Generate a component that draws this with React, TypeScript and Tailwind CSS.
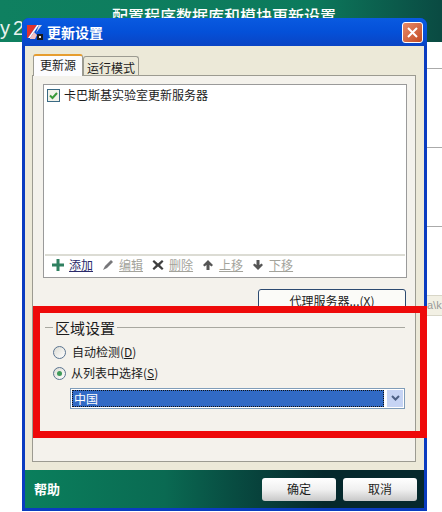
const F = "font-['SimSun','Noto_Sans_CJK_SC',sans-serif]";

function ToolItem({ icon, label, on }: { icon: React.ReactNode; label: string; on?: boolean }) {
  return (
    <div className="flex items-center gap-[5px]">
      <svg width="12" height="12" viewBox="0 0 12 12">{icon}</svg>
      <span className={`text-[12px] leading-[14px] underline ${on ? 'text-[#2a2a6a]' : 'text-[#a3a39b]'}`}>{label}</span>
    </div>
  );
}

export default function App() {
  return (
    <div className={`relative h-[512px] w-[442px] overflow-hidden bg-white ${F} text-[12px] text-[#1c1c1c]`}>
      <div className="flex h-[42px] justify-center bg-gradient-to-r from-[#0f8060] from-0% via-[#0c7a5c] via-70% to-[#0a4a42] to-100% pl-[6px]">
        <div className="mt-[6px] text-[16px] font-medium leading-[18px] text-white">配置程序数据库和模块更新设置</div>
      </div>
      <div className="absolute left-0 top-[15px] flex w-[22px] gap-[3px] overflow-hidden text-[20px] leading-[26px] text-[#e8f2ee] font-['Liberation_Sans',sans-serif]"><span>y</span><span>20</span></div>
      <div className="absolute right-0 top-[68px] h-px w-[16px] bg-[#aaa]" />
      <div className="absolute right-0 top-[147px] h-px w-[16px] bg-[#aaa]" />
      <div className="absolute right-0 top-[226px] h-px w-[16px] bg-[#aaa]" />
      <div className="absolute left-[22px] top-[18px] flex h-[493px] w-[405px] flex-col overflow-hidden rounded-t-[7px] bg-[#0a3cc0] px-[3px] pb-[3px]">
        <div className="-mx-[3px] flex h-[28px] shrink-0 items-center bg-gradient-to-b from-[#0a5ae0] via-[#0450d8] to-[#0a44c4] pl-[5px] pr-[4px]">
          <svg width="16" height="16" viewBox="0 0 16 16">
            <path d="M0 1h10L1 14l-1 0z" fill="#e0332c" />
            <path d="M10 1h2L3 14H1z" fill="#ffffff" />
            <path d="M12 1h3L9 9z" fill="#d8d8e0" />
            <path d="M3 14l4-6 3 3-2 4H3z" fill="#f3c0c0" />
            <rect x="10" y="10" width="6" height="6" fill="#1a1a1a" />
            <rect x="12" y="12" width="2" height="2" fill="#e8e8e8" />
          </svg>
          <span className="ml-[4px] text-[14px] font-semibold leading-[16px] text-white">更新设置</span>
          <div className="ml-auto mt-[1px] flex h-[21px] w-[21px] items-center justify-center rounded-[3px] border border-white bg-gradient-to-br from-[#e88a68] to-[#c24a20]">
            <svg width="13" height="13" viewBox="0 0 13 13"><path d="M2 2l9 9M11 2l-9 9" stroke="#fff" strokeWidth="2" /></svg>
          </div>
        </div>
        <div className="flex min-h-0 flex-1 flex-col bg-[#ece9d8] pl-[7px] pr-[8px] pt-[8px]">
          <div className="flex h-[21px] shrink-0 items-end pl-[1px]">
            <div className="relative z-10 -mb-px flex h-[22px] w-[50px] justify-center rounded-t-[3px] border-x border-[#9c9b91] border-t-[2px] border-t-[#e69d2f] bg-[#fcfcfe] pt-[2px] leading-[14px]">更新源</div>
            <div className="flex h-[19px] w-[56px] justify-center rounded-t-[3px] border-x border-t border-[#9c9b91] bg-[#ece9d8] pt-[4px] leading-[14px]">运行模式</div>
          </div>
          <div className="flex h-[387px] shrink-0 flex-col border border-[#9c9b91] bg-[#f4f2ec] pl-[10px] pr-[8px] pt-[8px]">
            <div className="flex h-[194px] shrink-0 flex-col border border-[#9a9a9a] bg-white">
              <div className="flex items-center gap-[4px] pl-[3px] pt-[3px]">
                <div className="flex h-[13px] w-[13px] items-center justify-center border border-[#3a6a84] bg-[#f2f2ea]">
                  <svg width="11" height="11" viewBox="0 0 11 11"><path d="M2 5.5l2.5 2.5L9 3" fill="none" stroke="#3a9a3a" strokeWidth="2" /></svg>
                </div>
                <span className="leading-[14px]">卡巴斯基实验室更新服务器</span>
              </div>
              <div className="mx-[1px] mt-auto flex h-[23px] items-center gap-[9px] border-t-[2px] border-[#dcdcd4] pb-[4px] pl-[7px]">
                <ToolItem on label="添加" icon={<path d="M4.500 0h3v4.500h4.500v3h-4.500v4.500h-3v-4.500h-4.500v-3h4.500z" fill="#2f8060" />} />
                <ToolItem label="编辑" icon={<path d="M9 1l2 2-6 6-4 2 2-4z" fill="#77777a" />} />
                <ToolItem label="删除" icon={<path d="M2 1l4 3.500L10 1l1.500 1.500L8 6l3.500 3.500L10 11 6 7.500 2 11 .5 9.500 4 6 .5 2.500z" fill="#3f3f3f" />} />
                <ToolItem label="上移" icon={<path d="M6 1l5 5-1.500 1.500L7.500 6v5h-3V6L2.500 7.500 1 6z" fill="#555" />} />
                <ToolItem label="下移" icon={<path d="M6 11L1 6l1.500-1.500L4.500 6V1h3v5l2-1.500L11 6z" fill="#555" />} />
              </div>
            </div>
            <div className="mt-[11px] flex justify-end pr-[1px]">
              <div className="flex h-[22px] w-[148px] items-start justify-center rounded-[3px] border border-[#2c4a70] bg-[#fbfbf8] pt-[4px] leading-[14px]">代理服务器...(<span className="underline">X</span>)</div>
            </div>
            <div className="ml-[2px] mr-[2px] mt-[9px] flex h-[15px] items-center">
              <div className="h-px w-[8px] bg-[#a8a8a0]" />
              <span className="mx-[2px] text-[15px] leading-[15px]">区域设置</span>
              <div className="h-px flex-1 bg-[#a8a8a0]" />
            </div>
            <div className="mt-[10px] flex flex-col gap-[7px] pl-[10px]">
              <div className="flex h-[14px] items-center gap-[6px]">
                <div className="h-[13px] w-[13px] rounded-full border border-[#5a7490] bg-gradient-to-br from-[#dcdcd4] to-[#ffffff]" />
                <span className="leading-[14px]">自动检测(<span className="underline">D</span>)</span>
              </div>
              <div className="flex h-[14px] items-center gap-[5px]">
                <div className="flex h-[13px] w-[13px] items-center justify-center rounded-full border border-[#5a7490] bg-gradient-to-br from-[#dcdcd4] to-[#ffffff]">
                  <div className="h-[5px] w-[5px] rounded-full bg-[#3f9a5a]" />
                </div>
                <span className="leading-[14px]">从列表中选择(<span className="underline">S</span>)</span>
              </div>
            </div>
            <div className="ml-[27px] mt-[8px] flex h-[21px] w-[335px] border border-[#7f9db9] bg-white p-[1px]">
              <div className="flex flex-1 items-center border border-dotted border-[#111] bg-[#316ac5] pl-[1px] leading-[14px] text-white">中国</div>
              <div className="ml-[3px] flex w-[16px] items-center justify-center bg-[#c6d4f4]">
                <svg width="9" height="7" viewBox="0 0 9 7"><path d="M1 1l3.500 3.500L8 1" fill="none" stroke="#4d6185" strokeWidth="2" /></svg>
              </div>
            </div>
          </div>
          <div className="h-[8px]" />
        </div>
        <div className="flex h-[38px] shrink-0 items-center bg-gradient-to-r from-[#0a7f5c] from-0% via-[#0a6a52] via-35% to-[#05282c] to-75% pl-[9px] pr-[7px]">
          <span className="text-[13px] font-semibold leading-[14px] text-white">帮助</span>
          <div className="ml-auto flex h-[23px] w-[74px] items-center justify-center rounded-[3px] bg-gradient-to-b from-[#ffffff] via-[#f0f0f0] to-[#c8c8c8] leading-[14px]">确定</div>
          <div className="ml-[7px] flex h-[23px] w-[74px] items-center justify-center rounded-[3px] bg-gradient-to-b from-[#ffffff] via-[#f0f0f0] to-[#c8c8c8] leading-[14px]">取消</div>
        </div>
      </div>
      <div className="absolute left-[33px] top-[306px] h-[132px] w-[394px] border-[7px] border-[#ee0a0a]" />
      <div className="absolute left-[427px] top-[295px] flex h-[21px] w-[15px] items-center overflow-hidden border-y border-[#d8d6c8] bg-[#f2f0e4] text-[11px] text-[#999] font-['Liberation_Sans',sans-serif]">a\k</div>
    </div>
  );
}
